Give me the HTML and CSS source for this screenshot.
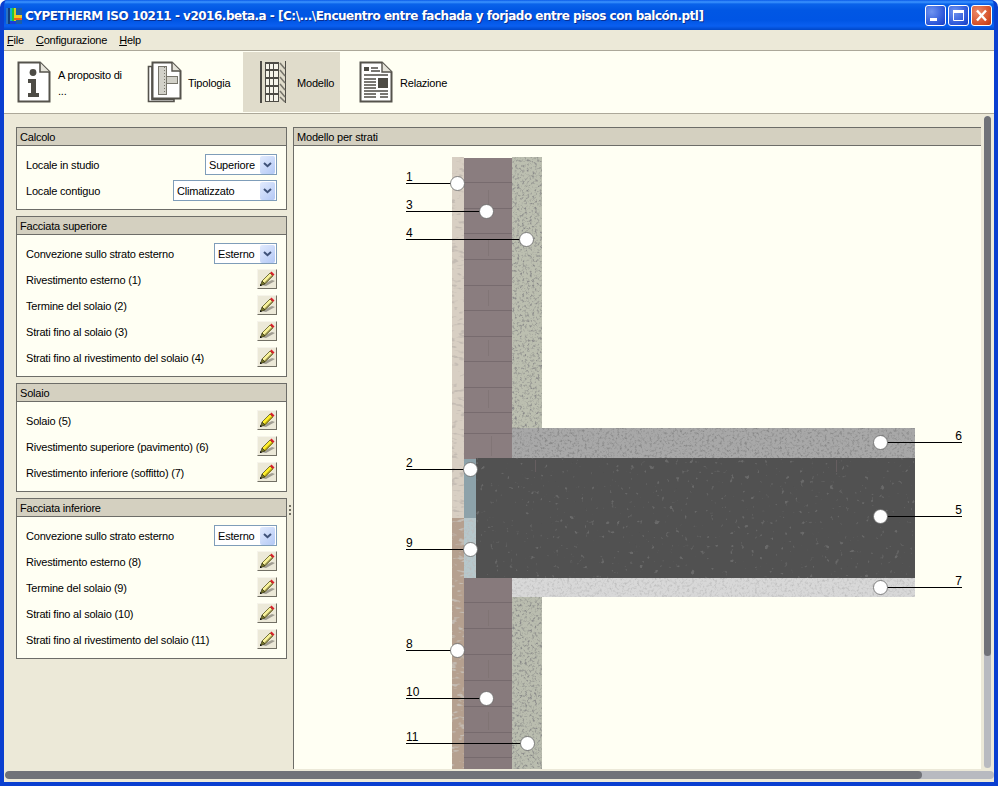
FILE: index.html
```html
<!DOCTYPE html>
<html lang="it">
<head>
<meta charset="utf-8">
<title>CYPETHERM ISO 10211</title>
<link rel="stylesheet" href="styles.css">
</head>
<body>
<svg class="defs" width="0" height="0" aria-hidden="true">
  <defs>
    <symbol id="pencil" viewBox="0 0 20 20">
      <path d="M4 16 L15 11 L18 12 L9 17 Z" fill="#a09d92"/>
      <path d="M5 12 L13 4 L16 7 L8 15 Z" fill="#ffef2a" stroke="#55521a" stroke-width=".8"/>
      <path d="M7 14 L15 6 L16 7 L8 15 Z" fill="#a89a18"/>
      <path d="M5 12 L8 15 L3.500 16.500 Z" fill="#77752a" stroke="#2c2b10" stroke-width=".6"/>
      <path d="M13 4 L14.500 2.500 L17.500 5.500 L16 7 Z" fill="#d8202a"/>
      <path d="M3 15 L3 17 L5 16.500 Z" fill="#000"/>
    </symbol>
    <symbol id="pencilpale" viewBox="0 0 20 20">
      <path d="M4 16 L15 11 L18 12 L9 17 Z" fill="#a09d92"/>
      <path d="M5 12 L13 4 L16 7 L8 15 Z" fill="#f8f29a" stroke="#55521a" stroke-width=".8"/>
      <path d="M7 14 L15 6 L16 7 L8 15 Z" fill="#8f8a50"/>
      <path d="M5 12 L8 15 L3.500 16.500 Z" fill="#77752a" stroke="#2c2b10" stroke-width=".6"/>
      <path d="M13 4 L14.500 2.500 L17.500 5.500 L16 7 Z" fill="#d8202a"/>
      <path d="M3 15 L3 17 L5 16.500 Z" fill="#000"/>
    </symbol>
    <symbol id="chev" viewBox="0 0 9 6">
      <path d="M1 1 L4.500 4.200 L8 1" fill="none" stroke="#3f5278" stroke-width="2"/>
    </symbol>
  </defs>
</svg>

<div class="window">
  <header class="titlebar">
    <svg class="logo" width="16" height="16" viewBox="0 0 16 16">
      <rect width="16" height="16" fill="#1c5fa8"/>
      <rect x="0" width="2" height="16" fill="#2b73c2"/>
      <rect x="2" width="2" height="16" fill="#123f80"/>
      <rect x="4" width="2" height="16" fill="#10b0d0"/>
      <rect x="6" width="2" height="16" fill="#21c43a"/>
      <rect x="8" width="2" height="16" fill="#d8d020"/>
      <rect x="10" y="0" width="6" height="7" fill="#1c5fa8"/>
      <rect x="8" y="7" width="8" height="3" fill="#f2c81a"/>
      <rect x="8" y="10" width="8" height="2" fill="#e8601a"/>
      <rect x="4" y="13" width="6" height="3" fill="#1a3fd8"/>
      <rect x="10" y="12" width="6" height="4" fill="#1c5fa8"/>
    </svg>
    <span class="title-text">CYPETHERM ISO 10211 - v2016.beta.a - [C:\...\Encuentro entre fachada y forjado entre pisos con balcón.ptl]</span>
    <div class="winbtns">
      <span class="winbtn"><svg width="19" height="19" viewBox="0 0 19 19"><rect x="4" y="12" width="7" height="3" fill="#fff"/></svg></span>
      <span class="winbtn"><svg width="19" height="19" viewBox="0 0 19 19"><path d="M4.500 5.500h10v9h-10z" fill="none" stroke="#fff"/><rect x="4" y="4" width="11" height="3" fill="#fff"/></svg></span>
      <span class="winbtn close"><svg width="19" height="19" viewBox="0 0 19 19"><path d="M5 4.500 L14 14.500 M14 4.500 L5 14.500" stroke="#fff" stroke-width="2.400"/></svg></span>
    </div>
  </header>

  <nav class="menubar">
    <span class="menu"><u>F</u>ile</span>
    <span class="menu"><u>C</u>onfigurazione</span>
    <span class="menu"><u>H</u>elp</span>
  </nav>

  <div class="toolbar">
    <div class="tool tool-info">
      <svg width="34" height="42" viewBox="0 0 34 42">
        <path d="M1.500 1.500H23L32.500 11V40.500H1.500Z" fill="#fff" stroke="#55534c" stroke-width="2"/>
        <path d="M23 1.500V11H32.500" fill="#e6e4da" stroke="#55534c" stroke-width="1.600"/>
        <circle cx="16" cy="11.500" r="3.400" fill="#4d4b45"/>
        <path d="M11 18H19V32H22V36H11V32H14V22H11Z" fill="#4d4b45"/>
      </svg>
      <span class="tool-label">A proposito di ...</span>
    </div>
    <div class="tool tool-tip">
      <svg width="35" height="42" viewBox="0 0 35 42">
        <path d="M1.500 5.500H5V38.500H27V40.500H1.500Z" fill="#fff" stroke="#55534c" stroke-width="1.600"/>
        <path d="M5.500 1.500H25L33.500 10V37.500H5.500Z" fill="#fff" stroke="#55534c" stroke-width="2"/>
        <path d="M25 1.500V10H33.500" fill="#e6e4da" stroke="#55534c" stroke-width="1.400"/>
        <rect x="11.500" y="5.500" width="8" height="28" fill="#d2d1c9" stroke="#77756c"/>
        <rect x="19.500" y="15.500" width="11" height="7" fill="#d2d1c9" stroke="#77756c"/>
        <path d="M17.500 6V33" stroke="#77756c" stroke-dasharray="1 2"/>
      </svg>
      <span class="tool-label">Tipologia</span>
    </div>
    <div class="tool tool-mod active">
      <svg width="26" height="42" viewBox="0 0 26 42">
        <rect x="0" width="2" height="42" fill="#4d4b45"/>
        <rect x="5" y="1" width="14" height="40" fill="#4d4b45"/>
        <path d="M6 3h3v5H6zM10 3h3v5h-3zM14 3h4v5h-4zM6 10h3v6H6zM10 10h3v6h-3zM14 10h4v6h-4zM6 18h3v6H6zM10 18h3v6h-3zM14 18h4v6h-4zM6 26h3v6H6zM10 26h3v6h-3zM14 26h4v6h-4zM6 34h3v6H6zM10 34h3v6h-3zM14 34h4v6h-4z" fill="#f6f4ea"/>
        <rect x="25" width="1" height="42" fill="#4d4b45"/>
        <path d="M20 2L25 8M20 9L25 15M20 16L25 22M20 23L25 29M20 30L25 36M20 36L25 41" stroke="#77756c" stroke-width="1.500"/>
      </svg>
      <span class="tool-label">Modello</span>
    </div>
    <div class="tool tool-rel">
      <svg width="34" height="42" viewBox="0 0 34 42">
        <path d="M1.500 1.500H23L32.500 11V40.500H1.500Z" fill="#fff" stroke="#55534c" stroke-width="2"/>
        <path d="M23 1.500V11H32.500" fill="#e6e4da" stroke="#55534c" stroke-width="1.400"/>
        <rect x="5" y="6" width="5" height="4" fill="#4d4b45"/>
        <path d="M12 7h7M12 10h9M5 14h24" stroke="#4d4b45" stroke-width="1.300"/>
        <path d="M5 18h12M5 21h12M5 24h12M5 27h12M5 30h24M5 33h12M5 36h12M21 33h8M21 36h8" stroke="#4d4b45" stroke-width="1.300"/>
        <rect x="19" y="17" width="10" height="10" fill="#4d4b45"/>
      </svg>
      <span class="tool-label">Relazione</span>
    </div>
  </div>

  <main class="workspace">
    <div class="content">
      <aside class="sidebar">
        <section class="group">
          <h2 class="group-head">Calcolo</h2>
          <div class="group-body">
            <div class="row"><span>Locale in studio</span>
              <span class="select sel-sup">Superiore<i class="sel-btn"><svg width="9" height="6"><use href="#chev"/></svg></i></span></div>
            <div class="row"><span>Locale contiguo</span>
              <span class="select sel-cli">Climatizzato<i class="sel-btn"><svg width="9" height="6"><use href="#chev"/></svg></i></span></div>
          </div>
        </section>
        <section class="group">
          <h2 class="group-head">Facciata superiore</h2>
          <div class="group-body">
            <div class="row"><span>Convezione sullo strato esterno</span>
              <span class="select sel-est">Esterno<i class="sel-btn"><svg width="9" height="6"><use href="#chev"/></svg></i></span></div>
            <div class="row"><span>Rivestimento esterno (1)</span><button class="edit"><svg width="20" height="20"><use href="#pencilpale"/></svg></button></div>
            <div class="row"><span>Termine del solaio (2)</span><button class="edit"><svg width="20" height="20"><use href="#pencilpale"/></svg></button></div>
            <div class="row"><span>Strati fino al solaio (3)</span><button class="edit"><svg width="20" height="20"><use href="#pencilpale"/></svg></button></div>
            <div class="row"><span>Strati fino al rivestimento del solaio (4)</span><button class="edit"><svg width="20" height="20"><use href="#pencilpale"/></svg></button></div>
          </div>
        </section>
        <section class="group">
          <h2 class="group-head">Solaio</h2>
          <div class="group-body">
            <div class="row"><span>Solaio (5)</span><button class="edit"><svg width="20" height="20"><use href="#pencil"/></svg></button></div>
            <div class="row"><span>Rivestimento superiore (pavimento) (6)</span><button class="edit"><svg width="20" height="20"><use href="#pencil"/></svg></button></div>
            <div class="row"><span>Rivestimento inferiore (soffitto) (7)</span><button class="edit"><svg width="20" height="20"><use href="#pencil"/></svg></button></div>
          </div>
        </section>
        <section class="group">
          <h2 class="group-head">Facciata inferiore</h2>
          <div class="group-body">
            <div class="row"><span>Convezione sullo strato esterno</span>
              <span class="select sel-est">Esterno<i class="sel-btn"><svg width="9" height="6"><use href="#chev"/></svg></i></span></div>
            <div class="row"><span>Rivestimento esterno (8)</span><button class="edit"><svg width="20" height="20"><use href="#pencilpale"/></svg></button></div>
            <div class="row"><span>Termine del solaio (9)</span><button class="edit"><svg width="20" height="20"><use href="#pencilpale"/></svg></button></div>
            <div class="row"><span>Strati fino al solaio (10)</span><button class="edit"><svg width="20" height="20"><use href="#pencilpale"/></svg></button></div>
            <div class="row"><span>Strati fino al rivestimento del solaio (11)</span><button class="edit"><svg width="20" height="20"><use href="#pencilpale"/></svg></button></div>
          </div>
        </section>
      </aside>

      <div class="splitter"><i></i><i></i><i></i></div>

      <section class="model">
        <h2 class="group-head model-head">Modello per strati</h2>
        <div class="model-body">
          <!-- viewBox origin equals the canvas' page position: x 294, y 146 -->
          <svg class="drawing" width="687" height="623" viewBox="294 146 687 623">
            <defs>
              <filter id="grain" x="0" y="0" width="100%" height="100%">
                <feTurbulence type="fractalNoise" baseFrequency=".4" numOctaves="3" seed="4" result="n"/>
                <feColorMatrix in="n" type="matrix" values="0 0 0 0 .25  0 0 0 0 .25  0 0 0 0 .25  3 0 0 0 -1.450" result="d"/>
                <feComposite in="d" in2="SourceGraphic" operator="in" result="dd"/>
                <feMerge><feMergeNode in="SourceGraphic"/><feMergeNode in="dd"/></feMerge>
              </filter>
              <filter id="grainlight" x="0" y="0" width="100%" height="100%">
                <feTurbulence type="fractalNoise" baseFrequency=".4" numOctaves="3" seed="9" result="n"/>
                <feColorMatrix in="n" type="matrix" values="0 0 0 0 .5  0 0 0 0 .5  0 0 0 0 .5  2.400 0 0 0 -1.120" result="d"/>
                <feComposite in="d" in2="SourceGraphic" operator="in" result="dd"/>
                <feMerge><feMergeNode in="SourceGraphic"/><feMergeNode in="dd"/></feMerge>
              </filter>
              <filter id="spots" x="0" y="0" width="100%" height="100%">
                <feTurbulence type="fractalNoise" baseFrequency=".2" numOctaves="2" seed="12" result="n"/>
                <feColorMatrix in="n" type="matrix" values="0 0 0 0 .14  0 0 0 0 .14  0 0 0 0 .14  9 0 0 0 -6.200" result="d"/>
                <feComposite in="d" in2="SourceGraphic" operator="in" result="dd"/>
                <feMerge><feMergeNode in="SourceGraphic"/><feMergeNode in="dd"/></feMerge>
              </filter>
              <filter id="faint" x="0" y="0" width="100%" height="100%">
                <feTurbulence type="fractalNoise" baseFrequency=".12 .3" numOctaves="2" seed="3" result="n"/>
                <feColorMatrix in="n" type="matrix" values="0 0 0 0 .55  0 0 0 0 .5  0 0 0 0 .45  6 0 0 0 -3.400" result="d"/>
                <feComposite in="d" in2="SourceGraphic" operator="in" result="dd"/>
                <feMerge><feMergeNode in="SourceGraphic"/><feMergeNode in="dd"/></feMerge>
              </filter>
            </defs>

            <rect x="452" y="157" width="12" height="361" fill="#d8cfc3" filter="url(#faint)"/>
            <rect x="452" y="518" width="12" height="251" fill="#b5a08f" filter="url(#faint)"/>

            <rect x="464" y="158" width="48" height="301" fill="#8a7d7f"/>
            <rect x="464" y="578" width="48" height="191" fill="#877a7c"/>
            <path class="joints" d="M464 182.500H512M464 208.500H512M464 233.500H512M464 259.500H512M464 285.500H512M464 310.500H512M464 336.500H512M464 361.500H512M464 387.500H512M464 412.500H512M464 433.500H512M464 602.500H512M464 628.500H512M464 654.500H512M464 680.500H512M464 706.500H512M464 732.500H512M464 757.500H512"/>
            <path class="joints-v" d="M488.500 190V206M488.500 240V256M488.500 290V306M488.500 340V356M488.500 390V408M491.500 436V456M488.500 610V626M488.500 660V678M488.500 712V730"/>

            <rect x="512" y="157" width="30" height="272" fill="#bcbfb0" filter="url(#grain)"/>
            <rect x="512" y="597" width="30" height="172" fill="#babdaf" filter="url(#grain)"/>

            <rect x="512" y="428" width="403" height="31" fill="#a8a8a8" filter="url(#grain)"/>
            <rect x="512" y="578" width="403" height="19" fill="#d8d8d8" filter="url(#grainlight)"/>

            <rect x="476" y="458" width="439" height="120" fill="#515151" filter="url(#spots)"/>
            <rect x="464" y="459" width="12" height="59" fill="#8da2aa"/>
            <rect x="464" y="518" width="12" height="60" fill="#b7c8cc" filter="url(#grainlight)"/>
            <path class="joints" d="M535.500 460V472M836.500 460V472"/>

            <g class="leader">
              <path d="M406 183.500H458M406 211.500H487M406 239.500H527M406 469.500H471M406 549.500H471M406 650.500H458M406 698.500H487M406 743.500H528M880 442.500H962M880 516.500H962M880 587.500H962"/>
              <circle cx="457.500" cy="183.500" r="7"/><circle cx="486.500" cy="211.500" r="7"/><circle cx="526.500" cy="239.500" r="7"/>
              <circle cx="470.500" cy="469.500" r="7"/><circle cx="470.500" cy="549.500" r="7"/><circle cx="457.500" cy="650.500" r="7"/>
              <circle cx="486.500" cy="698.500" r="7"/><circle cx="527.500" cy="743.500" r="7"/>
              <circle cx="880.500" cy="442.500" r="7"/><circle cx="880.500" cy="516.500" r="7"/><circle cx="880.500" cy="587.500" r="7"/>
            </g>
            <g class="labels">
              <text x="406" y="181">1</text><text x="406" y="209">3</text><text x="406" y="237">4</text>
              <text x="406" y="467">2</text><text x="406" y="547">9</text><text x="406" y="648">8</text>
              <text x="406" y="696">10</text><text x="406" y="741">11</text>
              <text x="962" y="440" text-anchor="end">6</text><text x="962" y="514" text-anchor="end">5</text><text x="962" y="585" text-anchor="end">7</text>
            </g>
          </svg>
        </div>
      </section>

      <div class="vscroll"><i class="vthumb"></i></div>
    </div>
    <div class="hscroll"><i class="hthumb"></i></div>
  </main>
</div>
</body>
</html>
```
FILE: styles.css
```css
* { box-sizing: border-box; }
html, body { margin: 0; padding: 0; }
body { width: 998px; height: 786px; overflow: hidden; font: 11px "Liberation Sans", Arial, sans-serif; letter-spacing: -.2px; color: #000; }
.defs { display: block; height: 0; }

.window {
  width: 998px; height: 786px; display: flex; flex-direction: column;
  background: #0a43d8; border-radius: 7px 7px 0 0; overflow: hidden;
  border-left: 4px solid #0a3fd0; border-right: 4px solid #0a3fd0; border-bottom: 4px solid #0a3fd0;
}
.titlebar {
  height: 30px; flex: none; margin: 0 -4px; padding: 0 6px 0 6px;
  display: flex; align-items: center; gap: 3px;
  background: linear-gradient(#0a5ae8 0, #3d95ff 2px, #0a63ea 4px, #0157e4 10px, #0055e4 20px, #0a5ff0 26px, #0047c8 30px);
  color: #fff;
}
.logo { flex: none; margin-top: 2px; }
.title-text {
  font: bold 12px "DejaVu Sans", Verdana, sans-serif; white-space: nowrap; letter-spacing: -.49px;
  text-shadow: 1px 1px 0 #0a2f90; margin-top: 1px;
}
.winbtns { margin-left: auto; display: flex; gap: 2px; margin-top: 1px; }
.winbtn {
  width: 21px; height: 21px; border: 1px solid #fff; border-radius: 3px;
  background: radial-gradient(circle at 30% 30%, #6f94f0, #2a55d8 70%, #1a3cc0);
}
.winbtn svg { display: block; margin: 0; }
.winbtn.close { background: radial-gradient(circle at 30% 30%, #ec8a6a, #d44e26 70%, #b8360f); }

.menubar { height: 20px; flex: none; background: #ece9d8; display: flex; align-items: center; gap: 12px; padding-left: 3px; }
.menu { line-height: 20px; }

.toolbar {
  height: 64px; flex: none; background: #fffff3; display: flex; align-items: stretch;
  border-top: 1px solid #aca899; border-bottom: 1px solid #aca899; padding: 1px 0 1px 13px;
}
.tool { display: flex; align-items: center; }
.tool-label { line-height: 16px; padding-top: 2px; }
.tool-info { width: 130px; gap: 7px; }
.tool-info .tool-label { width: 70px; }
.tool-tip { width: 96px; gap: 6px; }
.tool-mod { width: 97px; gap: 11px; padding-left: 17px; background: #e0dccb; }
.tool-rel { gap: 7px; padding-left: 19px; }

.workspace { flex: 1; min-height: 0; background: #ece9d8; display: flex; flex-direction: column; }
.content { flex: 1; min-height: 0; display: flex; padding: 13px 0 0 12px; }

.sidebar { width: 271px; flex: none; display: flex; flex-direction: column; gap: 6px; }
.group { border: 1px solid #6d6d68; background: #fffff3; }
.group-head {
  margin: 0; height: 18px; font: inherit; line-height: 16px; padding: 1px 0 0 3px;
  background: #d4d0c0; border-bottom: 1px solid #6d6d68;
}
.group-body { padding: 8px 9px; display: flex; flex-direction: column; gap: 5px; }
.row { height: 21px; display: flex; align-items: center; justify-content: space-between; }

.select {
  height: 21px; border: 1px solid #7f9db9; background: #fff; padding-left: 3px;
  display: flex; align-items: center; justify-content: space-between;
}
.sel-sup { width: 72px; }
.sel-cli { width: 104px; }
.sel-est { width: 63px; }
.sel-btn {
  width: 15px; height: 18px; margin-right: 1px; border-radius: 2px; flex: none;
  background: linear-gradient(135deg, #e2ebfd, #b3c8f5);
  display: flex; align-items: center; justify-content: center;
}
.edit {
  width: 20px; height: 20px; padding: 0; margin: 0; background: #ece9d8; display: block; align-self: flex-start;
  border: 1px solid; border-color: #f6f4ea #716f64 #716f64 #f6f4ea;
}
.edit svg { display: block; margin: -1px; }

.splitter { width: 6px; flex: none; align-self: flex-start; margin-top: 378px; display: flex; flex-direction: column; gap: 2px; align-items: center; }
.splitter i { width: 2px; height: 2px; background: #716f64; }

.model { width: 688px; flex: none; display: flex; flex-direction: column; border-left: 1px solid #6d6d68; }
.model-head { border-top: 1px solid #6d6d68; height: 19px; }
.model-body { flex: 1; min-height: 0; background: #fffff3; }
.drawing { display: block; }
.joints { fill: none; stroke: #6f6467; stroke-width: 1; opacity: .7; }
.joints-v { fill: none; stroke: #7c6f70; stroke-width: 1; opacity: .6; }
.leader path { fill: none; stroke: #000; stroke-width: 1; }
.leader circle { fill: #fff; stroke: #666; stroke-width: .8; }
.labels text { font: 12px "Liberation Sans", Arial, sans-serif; letter-spacing: 0; fill: #000; }

.vscroll { width: 7px; flex: none; margin: -11px 0 1px 3px; background: #b8bac0; border-radius: 4px; overflow: hidden; }
.vthumb { display: block; height: 540px; background: #707278; border-radius: 4px; }
.hscroll { height: 8px; flex: none; margin: 2px 0 3px 1px; background: #b8bac0; border-radius: 4px; overflow: hidden; }
.hthumb { display: block; width: 917px; height: 8px; background: #707278; border-radius: 4px; }
```
